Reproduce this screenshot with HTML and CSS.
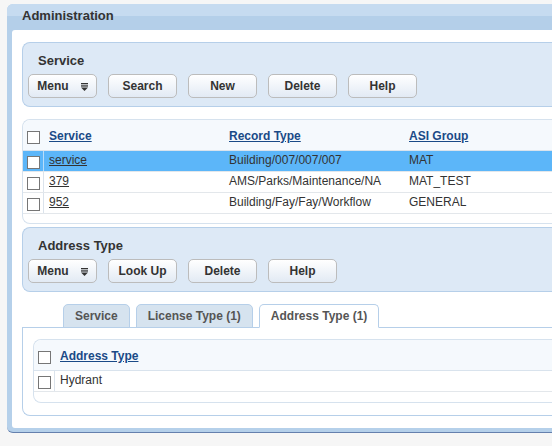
FILE: index.html
```html
<!DOCTYPE html>
<html>
<head>
<meta charset="utf-8">
<link rel="stylesheet" href="styles.css">
</head>
<body>
<div class="admin">
  <div class="admin-head">Administration</div>
  <div class="admin-body">
    <section class="panel">
      <h2 class="panel-title">Service</h2>
      <div class="toolbar">
        <button class="btn">Menu <svg class="menu-ico" width="7" height="8" viewBox="0 0 7 8"><rect x="0" y="0" width="7" height="1.3" fill="#333"/><rect x="0" y="2.3" width="7" height="1.3" fill="#333"/><polygon points="0,4.4 7,4.4 3.5,8" fill="#333"/></svg></button>
        <button class="btn">Search</button>
        <button class="btn">New</button>
        <button class="btn">Delete</button>
        <button class="btn">Help</button>
      </div>
    </section>

    <div class="grid grid-main">
      <div class="row head">
        <div class="cell chk"><span class="box"></span></div>
        <div class="cell"><a href="#" class="hlink">Service</a></div>
        <div class="cell"><a href="#" class="hlink">Record Type</a></div>
        <div class="cell"><a href="#" class="hlink">ASI Group</a></div>
      </div>
      <div class="row sel">
        <div class="cell chk"><span class="box"></span></div>
        <div class="cell"><a href="#" class="rlink">service</a></div>
        <div class="cell">Building/007/007/007</div>
        <div class="cell">MAT</div>
      </div>
      <div class="row">
        <div class="cell chk"><span class="box"></span></div>
        <div class="cell"><a href="#" class="rlink">379</a></div>
        <div class="cell">AMS/Parks/Maintenance/NA</div>
        <div class="cell">MAT_TEST</div>
      </div>
      <div class="row">
        <div class="cell chk"><span class="box"></span></div>
        <div class="cell"><a href="#" class="rlink">952</a></div>
        <div class="cell">Building/Fay/Fay/Workflow</div>
        <div class="cell">GENERAL</div>
      </div>
    </div>

    <section class="panel">
      <h2 class="panel-title">Address Type</h2>
      <div class="toolbar">
        <button class="btn">Menu <svg class="menu-ico" width="7" height="8" viewBox="0 0 7 8"><rect x="0" y="0" width="7" height="1.3" fill="#333"/><rect x="0" y="2.3" width="7" height="1.3" fill="#333"/><polygon points="0,4.4 7,4.4 3.5,8" fill="#333"/></svg></button>
        <button class="btn">Look Up</button>
        <button class="btn">Delete</button>
        <button class="btn">Help</button>
      </div>
    </section>

    <div class="tabs">
      <div class="tab">Service</div>
      <div class="tab">License Type (1)</div>
      <div class="tab active">Address Type (1)</div>
    </div>
    <div class="tab-body">
      <div class="grid grid-sub">
        <div class="row head">
          <div class="cell chk"><span class="box"></span></div>
          <div class="cell"><a href="#" class="hlink">Address Type</a></div>
        </div>
        <div class="row">
          <div class="cell chk"><span class="box"></span></div>
          <div class="cell">Hydrant</div>
        </div>
      </div>
    </div>
  </div>
</div>
</body>
</html>
```

FILE: styles.css
```css
html, body {
  margin: 0;
  padding: 0;
  background: #f6f6f6;
  overflow: hidden;
}
body {
  font-family: "Liberation Sans", Arial, sans-serif;
  font-size: 12px;
  color: #333;
  width: 552px;
  height: 446px;
}
.admin {
  margin: 4px 0 0 7px;
  width: 620px;
  background: #b5d0ea;
  border-radius: 6px 0 0 6px;
  border-bottom: 1px solid #6580ad;
  padding: 0 0 4px 5px;
}
.admin-head {
  margin-left: -5px;
  padding-left: 15px;
  height: 26px;
  line-height: 23px;
  font-size: 13px;
  font-weight: bold;
  color: #333;
  border-radius: 6px 0 0 0;
  background: linear-gradient(#c6dbf0 0, #c6dbf0 12px, #b4cfe9 12px, #b4cfe9 100%);
}
.admin-body {
  background: #fff;
  border-radius: 3px 0 0 3px;
  padding: 12px 0 12px 10px;
}
.panel {
  background: #dde9f6;
  border: 1px solid #b6cfe9;
  border-right: none;
  border-radius: 8px 0 0 8px;
  padding: 10px 0 8px 0;
}
.panel-title {
  margin: 0;
  padding-left: 15px;
  font-size: 13px;
  font-weight: bold;
  line-height: 16px;
  color: #333;
}
.toolbar {
  display: flex;
  gap: 11px;
  margin-top: 5px;
  padding-left: 5px;
}
.btn {
  box-sizing: border-box;
  width: 69px;
  height: 24px;
  padding: 0;
  border: 1px solid #bcbcbc;
  border-radius: 5px;
  background: linear-gradient(#ffffff, #e2eaf4);
  font-family: "Liberation Sans", Arial, sans-serif;
  font-size: 12px;
  font-weight: bold;
  color: #333;
  line-height: 22px;
  display: flex;
  align-items: center;
  justify-content: center;
}
.menu-ico {
  margin-left: 12px;
  margin-top: 1px;
}
.grid {
  border: 1px solid #d6e2ee;
  border-right: none;
  border-radius: 8px 0 0 8px;
  background: #fff;
}
.grid-main {
  margin: 12px 0 3px 0;
  padding-bottom: 9px;
}
.grid-sub {
  padding-bottom: 10px;
}
.row {
  display: grid;
  grid-template-columns: 21px 180px 180px 1fr;
  box-sizing: border-box;
  height: 21px;
  border-bottom: 1px solid #e3e7eb;
  line-height: 17px;
}
.grid-sub .row {
  grid-template-columns: 21px 1fr;
}
.row.head {
  height: 31px;
  background: #f5f9fd;
  border-bottom: 1px solid #d9e3ed;
  border-radius: 8px 0 0 0;
  line-height: 15px;
}
.cell {
  padding-left: 5px;
  padding-top: 1px;
  white-space: nowrap;
}
.row.head .cell {
  padding-top: 9px;
}
.cell.chk {
  box-sizing: border-box;
  padding: 0;
  border-right: 1px solid #dbe3ec;
}
.row.head .cell.chk {
  border-right: none;
  padding: 0;
}
.box {
  display: block;
  box-sizing: border-box;
  width: 13px;
  height: 13px;
  border: 1px solid #767676;
  background: #fff;
  margin: 5px 0 0 4px;
}
.row.head .box {
  margin-top: 11px;
}
.row.sel {
  background: #5cb6f9;
  border-bottom-color: #e3e7eb;
}
.row.sel .cell.chk {
  border-right-color: #b9ddf9;
}
.hlink {
  color: #1a4a87;
  font-weight: bold;
  text-decoration: underline;
}
.rlink {
  color: #333;
  text-decoration: underline;
}
.tabs {
  display: flex;
  gap: 6px;
  margin-top: 12px;
  margin-bottom: -1px;
  padding-left: 41px;
  position: relative;
  z-index: 1;
}
.tab {
  padding: 0 11px;
  line-height: 22px;
  border: 1px solid #b6cfe9;
  border-radius: 5px 5px 0 0;
  background: #d6e3ef;
  font-weight: bold;
  color: #555;
}
.tab.active {
  background: #fff;
  border-bottom-color: #fff;
}
.tab-body {
  border: 1px solid #b6cfe9;
  border-right: none;
  border-radius: 0 0 0 8px;
  padding: 11px 0 12px 10px;
}
```
